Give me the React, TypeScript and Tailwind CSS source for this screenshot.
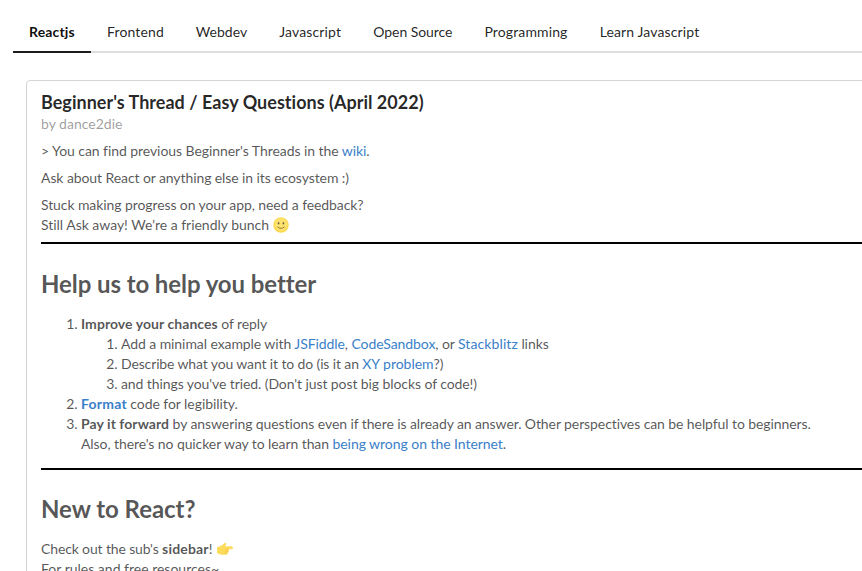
import React from 'react';

const tabs = [
  { label: 'Frontend', style: 'w-[88.7px] tracking-[0.14px]' },
  { label: 'Webdev', style: 'w-[83.6px] tracking-[0.08px]' },
  { label: 'Javascript', style: 'w-[94px] tracking-[0.14px]' },
  { label: 'Open Source', style: 'w-[111.2px] tracking-[-0.06px]' },
  { label: 'Programming', style: 'w-[115.2px] tracking-[0.12px]' },
  { label: 'Learn Javascript', style: 'w-[132px] tracking-[0.13px]' },
];

function Link({ children }: { children: React.ReactNode }) {
  return <a href="#" className="text-[#3a80c9]">{children}</a>;
}

function Bold({ children }: { children: React.ReactNode }) {
  return <strong className="tracking-[0.06px]">{children}</strong>;
}

function Smile() {
  return (
    <svg viewBox="0 0 36 36" className="inline-block size-4 align-[-3px]">
      <circle cx="18" cy="18" r="17.4" fill="#fbd84f" />
      <circle cx="18" cy="17" r="14.5" fill="#fde36c" />
      <ellipse cx="12.5" cy="14" rx="1.8" ry="2.8" fill="#77624a" />
      <ellipse cx="23.5" cy="14" rx="1.8" ry="2.8" fill="#77624a" />
      <path d="M10.5 22.5 Q18 29.5 25.5 22.5" fill="none" stroke="#8d7039" strokeWidth="2" strokeLinecap="round" />
    </svg>
  );
}

function Point() {
  return (
    <svg viewBox="0 0 36 36" className="ml-px inline-block size-4 align-[-3px]">
      <path d="M0 14 L7 12 Q13 9 16 5 Q20 2 21 6 Q21 9 18 12 H33 Q36 13 36 15 Q36 18 33 18.500 H26 Q28 20 26 23 Q27 26 24 27 Q24 31 20 31 H10 Q4 30 0 27Z" fill="#fddc5b" />
      <path d="M18 18.500 H26 M18 23 H26 M17 27 H24" stroke="#f2bb42" strokeWidth="1.3" fill="none" />
    </svg>
  );
}

export default function App() {
  return (
    <div className="h-[571px] w-[862px] overflow-hidden bg-white pl-[13px] pt-[14px] font-['Lato',sans-serif] text-[14px] leading-5 text-black/68">
      <nav className="flex h-[39px] border-b-2 border-[#dedede] text-black/87">
        <a className="-mb-0.5 w-[78px] shrink-0 border-b-2 border-[#1b1c1d] pl-4 pt-2 font-bold tracking-[0.16px] text-black/95">Reactjs</a>
        {tabs.map((t) => <a key={t.label} className={`shrink-0 whitespace-nowrap pl-4 pt-2 ${t.style}`}>{t.label}</a>)}
      </nav>
      <main className="ml-[13px] mt-[27px] h-[600px] w-[900px] rounded border border-[#d4d4d5] px-[14px] pt-[9px] tracking-[-0.09px]">
        <h2 className="text-[18px] font-bold leading-[24px] tracking-[0.015px] text-black/85">Beginner's Thread / Easy Questions (April 2022)</h2>
        <div className="tracking-normal text-black/40">by dance2die</div>
        <p className="mt-[7px] tracking-[-0.065px]">&gt; You can find previous Beginner's Threads in the <Link>wiki</Link>.</p>
        <p className="mt-[7px]">Ask about React or anything else in its ecosystem :)</p>
        <p className="mt-[7px]">Stuck making progress on your app, need a feedback?<br /><span className="tracking-[-0.025px]">Still Ask away! We’re a friendly bunch <Smile /></span></p>
        <hr className="mt-[7px] border-t-2 border-black" />
        <h1 className="mt-[24px] text-[24px] font-bold leading-[31px] tracking-[-0.08px]">Help us to help you better</h1>
        <ol className="mt-[15px] list-decimal pl-10">
          <li><Bold>Improve your chances</Bold> of reply
            <ol className="list-decimal pl-10">
              <li><span className="tracking-[-0.08px]">Add a minimal example with <Link>JSFiddle</Link>, <Link>CodeSandbox</Link>, or <span className="tracking-[0.1px]"><Link>Stackblitz</Link></span> links</span></li>
              <li><span className="tracking-[-0.13px]">Describe what you want it to do (is it an <span className="tracking-[-0.02px]"><Link>XY problem</Link></span>?)</span></li>
              <li>and things you've tried. (Don't just post big blocks of code!)</li>
            </ol>
          </li>
          <li><Link><strong className="tracking-[0.22px]">Format</strong></Link><span className="tracking-[-0.06px]"> code for legibility.</span></li>
          <li><Bold>Pay it forward</Bold> by answering questions even if there is already an answer. Other perspectives can be helpful to beginners.<br />Also, there's no quicker way to learn than <span className="tracking-[-0.05px]"><Link>being wrong on the Internet</Link></span>.</li>
        </ol>
        <hr className="mt-[14px] border-t-2 border-black" />
        <h1 className="mt-[23px] text-[24px] font-bold leading-[31px] tracking-[-0.04px]">New to React?</h1>
        <p className="mt-[15px]"><span className="tracking-[-0.14px]">Check out the sub's </span><strong className="tracking-[0.18px]">sidebar</strong>! <Point /><br /><span className="tracking-normal">For rules and free resources~</span></p>
      </main>
    </div>
  );
}
